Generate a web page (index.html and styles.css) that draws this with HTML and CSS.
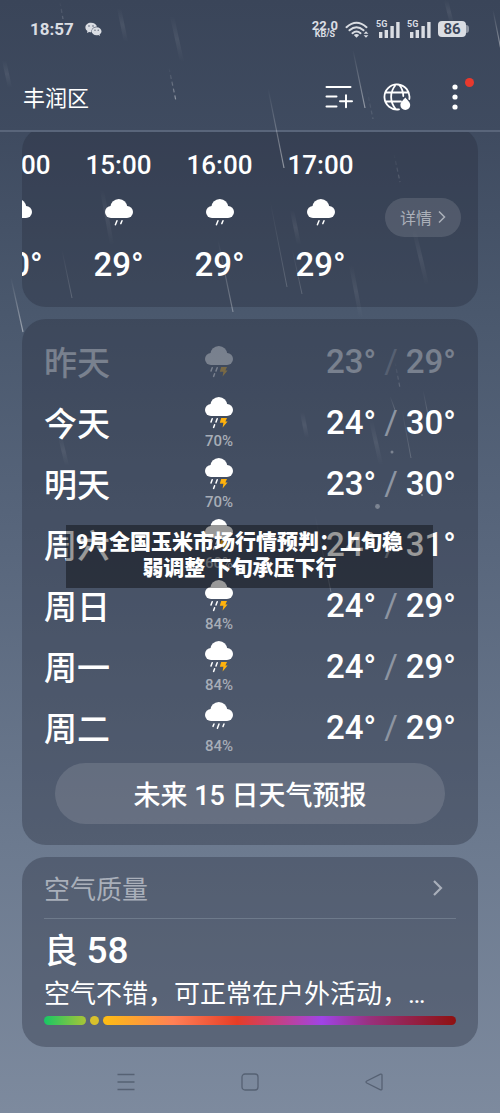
FILE: index.html
```html
<!DOCTYPE html>
<html lang="zh-CN">
<head>
<meta charset="utf-8">
<meta name="viewport" content="width=device-width, initial-scale=1">
<title>丰润区 天气</title>
<link rel="stylesheet" href="styles.css">
</head>
<body>
<svg class="defs" aria-hidden="true">
  <symbol id="cloud" viewBox="0 0 28 32">
    <circle cx="13.8" cy="8.6" r="8.6"/><rect y="7" width="28" height="12" rx="6"/><path d="M5 8.5 7 6h14l2 2.500v3H5z"/>
  </symbol>
  <symbol id="light-rain" viewBox="0 0 28 32">
    <use href="#cloud"/>
    <path class="drop" d="M12 21.800 10.400 25.800M17 21.800 15.800 24.600"/>
  </symbol>
  <symbol id="rain" viewBox="0 0 28 32">
    <use href="#cloud"/>
    <path class="drop" d="M9 22 8 24.400M14 22 12.400 26.200M19 22 18 24.600"/>
  </symbol>
  <symbol id="thunder" viewBox="0 0 28 32">
    <use href="#cloud"/>
    <path class="drop" d="M7.200 21.800 6 25M12.200 21.800 11 25M9.600 27.800 8.600 30.400"/>
    <path class="bolt" d="M16.200 21h5.800l-1.600 3.400h2.200L17.600 30.400l.8-4.600h-3.600z"/>
  </symbol>
  <symbol id="signal" viewBox="0 0 24 17">
    <path d="M3 11h3.400v6H3zM8.600 9H12v8H8.600zM14.400 5h3.400v12h-3.400zM20.200 1h3.400v16h-3.400z"/>
  </symbol>
</svg>
<div class="phone">
  <div class="status">
    <span class="clock">18:57</span>
    <svg class="wechat" viewBox="0 0 17 15" aria-hidden="true">
      <path fill="currentColor" d="M6 .8C2.800.8.4 2.900.4 5.500c0 1.500.8 2.700 2 3.600L2 11l2.100-1.100c.8.200 1.500.300 2.300.3C6.200 6.900 8.500 4.600 12 4.500 11.300 2.200 8.900.8 6 .8z"/>
      <path fill="currentColor" d="M11.600 5.300c-2.800 0-4.900 1.800-4.900 4s2.100 4 4.900 4c.6 0 1.200-.1 1.700-.2l1.700.9-.4-1.500c1.200-.8 1.900-1.900 1.900-3.200 0-2.200-2.100-4-4.900-4z"/>
      <g fill="#3c475b"><circle cx="4" cy="4" r=".7"/><circle cx="8" cy="4" r=".7"/><circle cx="10" cy="8.200" r=".6"/><circle cx="13.200" cy="8.200" r=".6"/></g>
    </svg>
    <div class="status-right">
      <span class="speed"><b>22.0</b><small>KB/S</small></span>
      <svg class="wifi" viewBox="0 0 24 17" fill="none" stroke="currentColor" stroke-width="2" stroke-linecap="round" aria-hidden="true">
        <path d="M1.500 6.200Q11.500-2.800 21.500 6.200M4.500 9.300q7-6.200 14 0M7.500 12.200q4-3.400 8 0"/>
        <path fill="currentColor" stroke="none" d="M8.800 14q2.700-1.800 5.400 0l-2.700 2.800zM18.600 12.800h4.800L21 10.200zM18.600 14.200h4.800L21 16.800z"/>
      </svg>
      <span class="cell"><em>5G</em><svg viewBox="0 0 24 17" fill="currentColor" aria-hidden="true"><use href="#signal"/></svg></span>
      <span class="cell"><em>5G</em><svg viewBox="0 0 24 17" fill="currentColor" aria-hidden="true"><use href="#signal"/></svg></span>
      <span class="battery">86</span>
    </div>
  </div>

  <header class="header">
    <h1>丰润区</h1>
    <button class="icon-btn" aria-label="城市管理">
      <svg viewBox="0 0 28 28" fill="none" stroke="currentColor" stroke-width="2" stroke-linecap="round"><path d="M1.500 4h24M1.500 13.500h10M1.500 23.500h10M15 18.200h12M21 12.200v12"/></svg>
    </button>
    <button class="icon-btn" aria-label="天气地图">
      <svg viewBox="0 0 28 28" fill="none" stroke="currentColor" stroke-width="1.800" stroke-linecap="round">
        <path d="M16 26.300A12.500 12.500 0 1 1 26.300 16M2.500 9.500h23M2.500 18.500h15.500M13 26.500C6.500 19 6.500 9 13 1.500M16 1.500c2.600 3.200 4.200 7 4.300 11.500"/>
        <path fill="currentColor" stroke="none" d="M22.300 14.500c2 2.600 4.900 4.600 4.900 7.600a4.900 4.900 0 0 1-9.800 0c0-3 2.900-5 4.900-7.600z"/>
      </svg>
    </button>
    <button class="icon-btn more" aria-label="更多">
      <svg viewBox="0 0 28 28" fill="currentColor"><circle cx="14" cy="4" r="2.600"/><circle cx="14" cy="14" r="2.600"/><circle cx="14" cy="24" r="2.600"/></svg>
      <span class="badge"></span>
    </button>
  </header>

  <main class="content">
    <section class="card hourly">
      <ul class="hours">
        <li><span class="time">14:00</span><svg class="wx"><use href="#light-rain"/></svg><span class="deg">30°</span></li>
        <li><span class="time">15:00</span><svg class="wx"><use href="#light-rain"/></svg><span class="deg">29°</span></li>
        <li><span class="time">16:00</span><svg class="wx"><use href="#light-rain"/></svg><span class="deg">29°</span></li>
        <li><span class="time">17:00</span><svg class="wx"><use href="#light-rain"/></svg><span class="deg">29°</span></li>
      </ul>
      <button class="detail">详情<svg viewBox="0 0 8 14" fill="none" stroke="currentColor" stroke-width="1.500"><path d="M1 1.500 6.500 7 1 12.500"/></svg></button>
    </section>

    <section class="card daily">
      <ul class="days">
        <li class="past"><span class="day">昨天</span><span class="sky"><svg class="wx"><use href="#thunder"/></svg></span><span class="range"><b>23°</b><i>/</i><b>29°</b></span></li>
        <li><span class="day">今天</span><span class="sky"><svg class="wx"><use href="#thunder"/></svg><small>70%</small></span><span class="range"><b>24°</b><i>/</i><b>30°</b></span></li>
        <li><span class="day">明天</span><span class="sky"><svg class="wx"><use href="#thunder"/></svg><small>70%</small></span><span class="range"><b>23°</b><i>/</i><b>30°</b></span></li>
        <li><span class="day">周六</span><span class="sky"><svg class="wx"><use href="#thunder"/></svg><small>60%</small></span><span class="range"><b>24°</b><i>/</i><b>31°</b></span></li>
        <li><span class="day">周日</span><span class="sky"><svg class="wx"><use href="#thunder"/></svg><small>84%</small></span><span class="range"><b>24°</b><i>/</i><b>29°</b></span></li>
        <li><span class="day">周一</span><span class="sky"><svg class="wx"><use href="#thunder"/></svg><small>84%</small></span><span class="range"><b>24°</b><i>/</i><b>29°</b></span></li>
        <li><span class="day">周二</span><span class="sky"><svg class="wx"><use href="#rain"/></svg><small>84%</small></span><span class="range"><b>24°</b><i>/</i><b>29°</b></span></li>
      </ul>
      <button class="forecast">未来 15 日天气预报</button>
    </section>

    <section class="card air">
      <h2>空气质量<svg viewBox="0 0 10 16" fill="none" stroke="currentColor" stroke-width="2.200"><path d="M1 1 8 8 1 15"/></svg></h2>
      <p class="level">良 <b>58</b></p>
      <p class="advice">空气不错，可正常在户外活动，…</p>
      <div class="scale"><span class="good"></span><span class="mark"></span><span class="rest"></span></div>
    </section>
  </main>

  <nav class="nav">
    <button aria-label="最近任务"><svg viewBox="0 0 18 18"><path d="M.5 1.500h17M.5 9h17M.5 16.500h17"/></svg></button>
    <button aria-label="主屏幕"><svg viewBox="0 0 18 18"><rect x="1" y="1" width="16" height="16" rx="3"/></svg></button>
    <button aria-label="返回"><svg viewBox="0 0 18 18"><path d="M15.500 1.200 1.800 8q-1.600 1 0 2l13.700 6.800q1.500.4 1.500-1V2.200q0-1.400-1.500-1z"/></svg></button>
  </nav>

  <svg class="rain" viewBox="0 0 500 1113" preserveAspectRatio="xMidYMin slice" aria-hidden="true">
    <defs>
      <linearGradient id="fade" x1="0" y1="0" x2="0" y2="1"><stop offset="0" stop-color="#fff" stop-opacity="0"/><stop offset="1" stop-color="#fff" stop-opacity=".45"/></linearGradient>
      <linearGradient id="mist" x1="0" y1="0" x2="0" y2="1"><stop offset="0" stop-color="#fff" stop-opacity="0"/><stop offset=".5" stop-color="#fff" stop-opacity=".07"/><stop offset="1" stop-color="#fff" stop-opacity="0"/></linearGradient>
    </defs>
    <g stroke="url(#fade)" stroke-width="1.200">
      <path d="M353 50 365 108"/><path d="M268 88 284 168"/><path d="M493 10 501 50"/><path d="M11 278 23 332"/><path d="M218 240 233 312" opacity=".7"/>
    </g>
    <g stroke="url(#fade)" stroke-width="1" opacity=".4">
      <path d="M62 250 72 298"/><path d="M270 200 287 287"/><path d="M292 248 302 294"/><path d="M402 410 411 458"/><path d="M390 396 395 410"/><path d="M423 390 428 415"/><path d="M315 515 331 592"/>
    </g>
    <g stroke="url(#fade)" stroke-width="1.200" stroke-dasharray="4 3">
      <path d="M169 68 176 101"/><path d="M60 2 63 19" opacity=".4"/><path d="M367 90 373 119" opacity=".3"/><path d="M394 154 400 182" opacity=".4"/><path d="M395 362 400 388" opacity=".4"/>
    </g>
    <g stroke="url(#mist)" stroke-width="4" stroke-linecap="round">
      <path d="M119 8 126 42"/><path d="M172 16 182 62"/><path d="M4 60 10 88"/><path d="M446 0 452 24"/><path d="M102 190 112 245"/><path d="M414 230 427 285"/><path d="M351 265 361 318"/><path d="M292 210 299 245"/><path d="M371 420 381 465"/><path d="M302 412 307 438"/><path d="M60 436 67 466"/>
    </g>
    <g fill="#fff" opacity=".3"><circle cx="392" cy="452" r="1.500"/><circle cx="377.500" cy="506.500" r="2.400"/><circle cx="422" cy="495" r="1"/></g>
  </svg>

  <p class="caption">9月全国玉米市场行情预判：上旬稳<br>弱调整 下旬承压下行</p>
</div>
</body>
</html>
```
FILE: styles.css
```css
* { box-sizing: border-box; }
body, h1, h2, p, ul { margin: 0; padding: 0; }
ul { list-style: none; }
body {
  font-family: Roboto, "Noto Sans CJK SC", sans-serif;
  color: #fff;
  background: #7d8a9e;
}
button {
  border: 0;
  padding: 0;
  background: none;
  color: inherit;
  font: inherit;
  cursor: pointer;
}
svg { display: block; }
.defs { position: absolute; width: 0; height: 0; }

.phone {
  position: relative;
  display: flex;
  flex-direction: column;
  min-height: 100vh;
  overflow: hidden;
  background: linear-gradient(#3a4559 0%, #3f4b60 12%, #4a586d 28%, #56647a 46%, #6c7a8f 76%, #7d8a9e 100%);
}

/* status bar */
.status {
  display: flex;
  align-items: center;
  height: 58px;
  padding: 0 34px 0 30px;
  color: #dadde3;
}
.clock { font-size: 17px; font-weight: 700; }
.wechat { width: 17px; height: 15px; margin-left: 11px; }
.status-right {
  display: flex;
  align-items: center;
  gap: 7px;
  margin-left: auto;
}
.speed { display: flex; flex-direction: column; align-items: center; }
.speed b { font-size: 13px; line-height: 9px; }
.speed small { font-size: 9px; font-weight: 700; line-height: 8px; }
.wifi { width: 24px; height: 17px; }
.cell { position: relative; }
.cell svg { width: 24px; height: 17px; }
.cell em {
  position: absolute;
  left: 0;
  top: -1px;
  font-size: 9px;
  font-style: normal;
  font-weight: 700;
  line-height: 9px;
}
.battery {
  position: relative;
  width: 28px;
  border-radius: 4px;
  background: #dadde3;
  color: #3b465a;
  font-size: 15px;
  font-weight: 700;
  line-height: 16px;
  text-align: center;
}
.battery::after {
  content: "";
  position: absolute;
  left: 28px;
  top: 4px;
  width: 3px;
  height: 8px;
  border-radius: 0 3px 3px 0;
  background: #8d94a1;
}

/* title bar */
.header {
  display: flex;
  align-items: center;
  gap: 30px;
  height: 74px;
  padding: 6px 31px 0 23px;
  border-bottom: 2px solid #59657a;
}
.header h1 { flex: 1; padding-top: 4px; font-size: 22px; font-weight: 400; line-height: 32px; }
.icon-btn { position: relative; width: 28px; height: 28px; }
.icon-btn svg { width: 28px; height: 28px; }
.badge {
  position: absolute;
  right: -5px;
  top: -5px;
  width: 9px;
  height: 9px;
  border-radius: 50%;
  background: #e8392d;
}

/* cards */
.content {
  display: flex;
  flex-direction: column;
  gap: 12px;
  padding: 0 22px;
  overflow: hidden;
}
.card { border-radius: 24px; background: rgba(40, 45, 60, .36); }
.wx { width: 28px; height: 32px; fill: #fff; }
.drop { fill: none; stroke: #fff; stroke-width: 1.5; stroke-linecap: round; }
.bolt { fill: #ffb20d; }

.hourly {
  display: flex;
  align-items: center;
  gap: 14px;
  margin-top: -5px;
  padding-right: 17px;
  overflow: hidden;
}
.hours {
  display: flex;
  flex: 1;
  justify-content: flex-end;
  min-width: 0;
  padding: 25px 0 26px;
  overflow: hidden;
}
.hours li {
  display: flex;
  flex: 0 0 101px;
  flex-direction: column;
  align-items: center;
}
.time { margin-bottom: 21px; font-size: 26px; font-weight: 500; line-height: 26px; }
.deg { margin-top: 18px; font-size: 33px; font-weight: 500; line-height: 32px; }
.detail {
  display: flex;
  align-items: center;
  justify-content: center;
  gap: 6px;
  width: 76px;
  height: 39px;
  border-radius: 20px;
  background: rgba(255, 255, 255, .12);
  color: #abb0b9;
  font-size: 16px;
}
.detail svg { width: 8px; height: 14px; }

.daily { padding: 12px 22px 21px; }
.days li {
  display: grid;
  grid-template-columns: 35% 15% 1fr;
  align-items: center;
  height: 61px;
}
.days .past { opacity: .3; }
.day { padding-top: 4px; font-size: 33px; font-weight: 500; line-height: 48px; }
.sky { display: flex; flex-direction: column; align-items: center; padding-top: 4px; }
.past .sky { padding-top: 0; }
.sky small { font-size: 15px; font-weight: 500; line-height: 24px; color: #a7adb7; }
.range {
  display: flex;
  justify-content: flex-end;
  gap: 8px;
  font-size: 33px;
  line-height: 48px;
}
.range b { font-weight: 500; }
.range i { font-style: normal; font-weight: 400; color: #8d95a2; }
.forecast {
  display: block;
  width: calc(100% - 22px);
  height: 61px;
  margin: 5px auto 0;
  border-radius: 31px;
  background: rgba(255, 255, 255, .12);
  font-size: 27px;
  font-weight: 500;
}

.air { padding: 0 22px 22px; }
.air h2 {
  display: flex;
  align-items: center;
  justify-content: space-between;
  height: 62px;
  padding-right: 13px;
  border-bottom: 1px solid #6e7a8b;
  color: #a9afba;
  font-size: 26px;
  font-weight: 400;
}
.air h2 svg { width: 10px; height: 16px; }
.level { padding-top: 10px; font-size: 34px; font-weight: 500; line-height: 44px; }
.level b { font-size: 37px; font-weight: 500; }
.advice {
  overflow: hidden;
  font-size: 26px;
  font-weight: 400;
  line-height: 42px;
  text-overflow: ellipsis;
  white-space: nowrap;
}
.scale { display: flex; gap: 4px; margin-top: 1px; }
.scale span { height: 9px; border-radius: 5px; }
.good { flex: 42; background: linear-gradient(90deg, #17c765, #a9c437); }
.mark { flex: 0 0 9px; background: #d8c12c; }
.rest {
  flex: 352;
  background: linear-gradient(90deg, #fdbd14 0%, #ff8056 20%, #e63d27 38%, #a044e6 62%, #99307a 76%, #8f1111 100%);
}

/* system navigation */
.nav {
  display: grid;
  grid-template-columns: repeat(3, 1fr);
  height: 66px;
  padding: 4px 64px 0;
}
.nav button { display: grid; place-items: center; }
.nav svg { width: 18px; height: 18px; fill: none; stroke: #566173; stroke-width: 1.3; }

/* layers over the content */
.rain {
  position: absolute;
  left: 0;
  top: 0;
  width: 100%;
  height: 100%;
  fill: none;
  pointer-events: none;
}
.caption {
  position: absolute;
  left: 13.2%;
  right: 13.4%;
  top: 525px;
  padding: 4px 20px 7px 0;
  background: rgba(0, 0, 0, .4);
  font-size: 21px;
  font-weight: 900;
  line-height: 26px;
  text-align: center;
  white-space: nowrap;
}
```
